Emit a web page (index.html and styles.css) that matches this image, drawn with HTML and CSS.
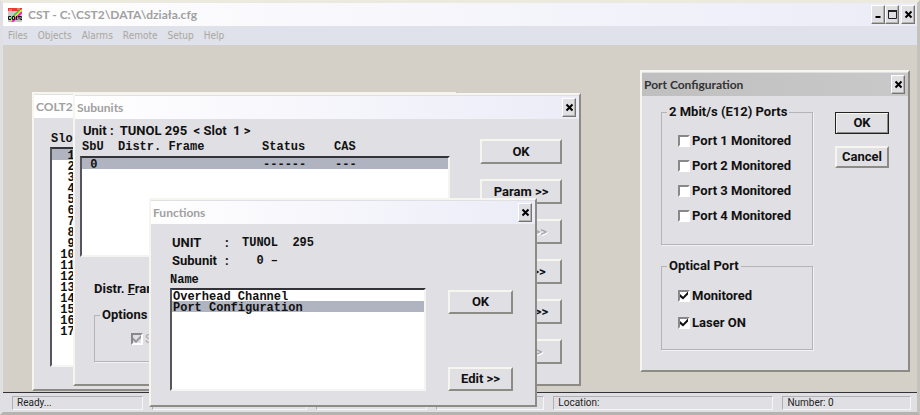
FILE: index.html
```html
<!DOCTYPE html>
<html lang="en">
<head>
<meta charset="utf-8">
<title>CST - C:\CST2\DATA\działa.cfg</title>
<link rel="stylesheet" href="styles.css">
</head>
<body>
<div class="app">
  <header class="titlebar">
    <svg class="logo" viewBox="0 0 14 14" aria-hidden="true">
      <rect width="14" height="14" fill="#c9c9c4"/>
      <rect width="14" height="3" fill="#e8392b"/>
      <path d="M1 2h3M9 1h3" stroke="#f8b0a0"/>
      <path d="M2 12L12 2" stroke="#30c040" stroke-width="2"/>
      <path d="M3 13L14 2" stroke="#f0f020" stroke-width="2"/>
      <path d="M4 14l10-10" stroke="#f020e0" stroke-width="2"/>
      <path d="M3 8.500H.5v3H3M4.500 8.500h2v3h-2zM8.500 8v3.500h1M10 8.500h2M11 8.500v3M12 8.500h1.500l-1 3h1.500" fill="none" stroke="#111"/>
    </svg>
    <h1>CST - C:\CST2\DATA\działa.cfg</h1>
    <div class="controls">
      <button class="sys" type="button" aria-label="Minimize"><svg viewBox="0 0 9 9"><path d="M1.500 7h5" stroke="#000" stroke-width="2"/></svg></button>
      <button class="sys" type="button" aria-label="Maximize"><svg viewBox="0 0 9 9"><path d="M.5 1v7.500h8V1" fill="none" stroke="#222"/><path d="M0 1h9" stroke="#222" stroke-width="2"/></svg></button>
      <button class="sys apart" type="button" aria-label="Close"><svg viewBox="0 0 9 9"><path d="M1.500 1.500l6 6M7.500 1.500l-6 6" stroke="#000" stroke-width="2"/></svg></button>
    </div>
  </header>
  <nav class="menu">
    <button type="button">Files</button>
    <button type="button">Objects</button>
    <button type="button">Alarms</button>
    <button type="button">Remote</button>
    <button type="button">Setup</button>
    <button type="button">Help</button>
  </nav>

  <main class="desktop">
    <section class="window colt">
      <div class="bar"><h2>COLT2</h2></div>
      <div class="body">
        <label class="mono" for="slots">Slot</label>
        <select class="list mono" id="slots" size="17">
          <option selected>&nbsp;&nbsp;1</option><option>&nbsp;&nbsp;2</option><option>&nbsp;&nbsp;3</option><option>&nbsp;&nbsp;4</option><option>&nbsp;&nbsp;5</option><option>&nbsp;&nbsp;6</option><option>&nbsp;&nbsp;7</option><option>&nbsp;&nbsp;8</option><option>&nbsp;&nbsp;9</option><option>&nbsp;10</option><option>&nbsp;11</option><option>&nbsp;12</option><option>&nbsp;13</option><option>&nbsp;14</option><option>&nbsp;15</option><option>&nbsp;16</option><option>&nbsp;17</option>
        </select>
      </div>
    </section>

    <section class="window subunits">
      <div class="bar"><h2>Subunits</h2><button class="sys" type="button" aria-label="Close"><svg viewBox="0 0 9 9"><path d="M1.500 1.500l6 6M7.500 1.500l-6 6" stroke="#000" stroke-width="2"/></svg></button></div>
      <div class="body">
        <div class="content">
          <p class="unit">Unit :&nbsp; TUNOL 295 &nbsp;&lt; Slot &nbsp;1 &gt;</p>
          <label class="mono columns" for="units">SbU  Distr. Frame        Status    CAS</label>
          <select class="list mono" id="units" size="9">
            <option selected>&nbsp;0&nbsp;&nbsp;&nbsp;&nbsp;&nbsp;&nbsp;&nbsp;&nbsp;&nbsp;&nbsp;&nbsp;&nbsp;&nbsp;&nbsp;&nbsp;&nbsp;&nbsp;&nbsp;&nbsp;&nbsp;&nbsp;&nbsp;&nbsp;------&nbsp;&nbsp;&nbsp;&nbsp;---</option>
          </select>
          <p class="frame">Distr. <u>F</u>rame</p>
          <fieldset class="options">
            <legend>Options</legend>
            <label class="check"><input type="checkbox" checked disabled>Status</label>
          </fieldset>
        </div>
        <div class="actions">
          <button class="push" type="button">OK</button>
          <button class="push" type="button">Param &gt;&gt;</button>
          <button class="push" type="button" disabled>Alarm &gt;&gt;</button>
          <button class="push" type="button">Funct &gt;&gt;</button>
          <button class="push" type="button">Status &gt;&gt;</button>
          <button class="push" type="button" disabled>Test &gt;&gt;</button>
        </div>
      </div>
    </section>

    <section class="window functions">
      <div class="bar"><h2>Functions</h2><button class="sys" type="button" aria-label="Close"><svg viewBox="0 0 9 9"><path d="M1.500 1.500l6 6M7.500 1.500l-6 6" stroke="#000" stroke-width="2"/></svg></button></div>
      <div class="body">
        <div class="content">
          <dl>
            <dt>UNIT</dt><dd>:</dd><dd class="mono">TUNOL  295</dd>
            <dt>Subunit</dt><dd>:</dd><dd class="mono">  0 –</dd>
          </dl>
          <label class="mono" for="names">Name</label>
          <select class="list mono" id="names" size="9">
            <option>Overhead Channel</option>
            <option selected>Port Configuration</option>
          </select>
        </div>
        <div class="actions">
          <button class="push" type="button">OK</button>
          <button class="push" type="button">Edit &gt;&gt;</button>
        </div>
      </div>
    </section>

    <section class="window ports active">
      <div class="bar"><h2>Port Configuration</h2><button class="sys" type="button" aria-label="Close"><svg viewBox="0 0 9 9"><path d="M1.500 1.500l6 6M7.500 1.500l-6 6" stroke="#000" stroke-width="2"/></svg></button></div>
      <div class="body">
        <div class="content">
          <fieldset>
            <legend>2 Mbit/s (E12) Ports</legend>
            <label class="check"><input type="checkbox">Port 1 Monitored</label>
            <label class="check"><input type="checkbox">Port 2 Monitored</label>
            <label class="check"><input type="checkbox">Port 3 Monitored</label>
            <label class="check"><input type="checkbox">Port 4 Monitored</label>
          </fieldset>
          <fieldset class="optical">
            <legend>Optical Port</legend>
            <label class="check"><input type="checkbox" checked>Monitored</label>
            <label class="check"><input type="checkbox" checked>Laser ON</label>
          </fieldset>
        </div>
        <div class="actions">
          <button class="push default" type="button">OK</button>
          <button class="push" type="button">Cancel</button>
        </div>
      </div>
    </section>
  </main>

  <footer class="status">
    <span>Ready...</span><span></span><span></span><span></span><span>Location:</span><span>Number: 0</span>
  </footer>
</div>
</body>
</html>
```
FILE: styles.css
```css
:root {
  --face: #e0dfe4;
  --light: #f6f5ee;
  --shade: #8c8b86;
  --select: #b0b3c0;
}

* { box-sizing: border-box; }

body {
  margin: 0;
  background: #d4d0c8;
  font: bold 13px/16px Roboto, "Liberation Sans", sans-serif;
  color: #111;
}

h1, h2, p, dl, dd { margin: 0; font-weight: inherit; }

button, input, select { margin: 0; font: inherit; color: inherit; }

.app {
  display: flex;
  flex-direction: column;
  height: 100vh;
  border: 3px solid var(--face);
  border-top-color: #ece9df;
  border-right-color: #c4c2bd;
  border-bottom-color: #b4b3ae;
  background: #d4d0c8;
}

.titlebar {
  display: flex;
  align-items: center;
  height: 23px;
  padding: 0 2px 0 5px;
  background: linear-gradient(90deg, #fff, #ececf8);
}

.logo { width: 14px; height: 14px; margin-right: 6px; }

.titlebar h1 {
  flex: 1;
  font: bold 12px/20px Lato, "Noto Sans", sans-serif;
  color: #a0a0a0;
}

.controls { display: flex; }

.sys {
  display: flex;
  align-items: center;
  justify-content: center;
  width: 14px;
  height: 19px;
  padding: 0;
  border: 1px solid;
  border-color: #fff #77756f #77756f #fff;
  background: var(--face);
  box-shadow: inset -1px -1px #b5b4b0;
}

.sys svg { flex: none; width: 9px; height: 9px; }

.apart { margin-left: 2px; }

.menu {
  display: flex;
  gap: 10px;
  height: 19px;
  padding: 0 5px;
  background: #dfe1eb;
}

.menu button {
  padding: 0;
  border: 0;
  background: none;
  font: 10px/18px "DejaVu Sans Condensed", sans-serif;
  color: #aaa79c;
}

.desktop { position: relative; z-index: 1; flex: 1; }

.window {
  position: absolute;
  display: flex;
  flex-direction: column;
  border: 2px solid;
  border-color: var(--light) var(--shade) var(--shade) var(--light);
  background: var(--face);
}

/* Offsets are measured from the desktop's corner. */
.colt { left: 29px; top: 47px; width: 425px; height: 299px; }
.subunits { left: 70px; top: 48px; width: 508px; height: 293px; }
.functions { left: 146px; top: 153px; width: 388px; height: 209px; }
.ports { left: 637px; top: 25px; width: 270px; height: 302px; }

.bar {
  display: flex;
  align-items: center;
  justify-content: space-between;
  height: 24px;
  padding: 0 3px 0 2px;
  border-top: 1px solid var(--face);
  background: linear-gradient(90deg, #fff, #ececf8);
}

.bar h2 {
  font: bold 12px/20px Lato, "Noto Sans", sans-serif;
  color: #a0a0a0;
}

.active .bar { background: linear-gradient(90deg, #bfbfbf, #c9c9c9); }
.active h2 { color: #333; }

.body { display: flex; flex: 1; min-height: 0; }

.content, .colt .body { display: flex; flex-direction: column; }

.mono {
  font: bold 12px/16px "Liberation Mono", monospace;
  white-space: pre;
}

.list {
  min-height: 0;
  padding: 0;
  overflow: hidden;
  border: 2px solid;
  border-color: #33333a #f4f4f2 #f4f4f2 #55555c;
  border-radius: 0;
  outline: 0;
  background: #fff;
}

.list option {
  display: block;
  height: 11px;
  min-height: 0;
  padding: 0 1px;
  font: bold 12px/11px "Liberation Mono", monospace;
}

.list option:checked {
  background: linear-gradient(var(--select), var(--select));
  color: #111;
}

.push {
  height: 25px;
  padding: 0;
  border: 2px solid;
  border-color: var(--light) var(--shade) var(--shade) var(--light);
  background: var(--face);
}

.push:disabled { color: #aaa9ad; text-shadow: 1px 1px #fff; }

.actions { display: flex; flex-direction: column; }

fieldset {
  min-width: 0;
  margin: 0;
  padding: 0 16px;
  border: 1px solid #b4b3b7;
  box-shadow: 1px 1px #f2f2f2;
}

legend { margin-left: -11px; padding: 0 2px; }

.check { display: flex; align-items: center; gap: 2px; height: 25px; }

.check input {
  appearance: none;
  width: 12px;
  height: 12px;
  border: 2px solid;
  border-color: #88878a #fff #fff #88878a;
  background: #fff;
}

.check input:checked { display: grid; }

.check input:checked::before {
  content: "";
  width: 8px;
  height: 8px;
  background: #111;
  clip-path: polygon(0 30%, 38% 65%, 100% 0, 100% 38%, 38% 100%, 0 68%);
}

.check input:disabled { background: var(--face); }
.check input:disabled::before { background: #999; }
.check:has(:disabled) { color: #aaa9ad; font-weight: normal; }

.colt .body { padding: 13px 14px 22px 16px; }
.colt label { padding-left: 1px; }
.colt .list { flex: 1; }

.subunits .body { justify-content: space-between; padding: 4px 17px 20px 5px; }
.subunits .content { width: 370px; }
.unit { padding-left: 3px; }
.columns { padding-left: 2px; }
.subunits .list { height: 101px; margin-top: 1px; }
.frame { padding: 24px 0 10px 14px; }
.options { height: 55px; margin: 0 14px; padding-left: 36px; }
.options legend { margin-left: -31px; }
.options .check { height: 32px; }
.subunits .actions { gap: 15px; width: 82px; padding-top: 16px; }

.functions .body { justify-content: space-between; padding: 11px 22px 14px 19px; }
.functions .content { width: 256px; }
.functions dl {
  display: grid;
  grid-template-columns: 53px 17px 1fr;
  row-gap: 2px;
  padding-left: 2px;
}
.functions .list { flex: 1; }
.functions label { margin-top: 3px; }
.functions .actions { justify-content: space-between; width: 65px; padding-top: 55px; }
.functions .push { height: 24px; }

.ports .body { justify-content: space-between; padding: 8px 19px 18px; }
.ports .content { width: 152px; }
.ports fieldset { height: 141px; }
.ports fieldset + fieldset { height: 92px; margin-top: 13px; }
.ports legend + .check { margin-top: 8px; }
.ports .optical .check { height: 27px; }
.ports .actions { gap: 12px; width: 54px; padding-top: 8px; }
.ports .push { height: 22px; }
.default { border-width: 1px; border-color: #222; box-shadow: inset 1px 1px var(--light), inset -1px -1px var(--shade); }

.status {
  display: grid;
  grid-template-columns: 130fr 155fr 110fr 108fr 219fr 128fr;
  gap: 9px;
  height: 20px;
  padding: 3px 6px 2px 9px;
  border-top: 1px solid #333;
  background: var(--face);
}

.status span {
  padding-left: 4px;
  border: 1px solid;
  border-color: #b0afb3 #f6f6f6 #f6f6f6 #b0afb3;
  font: 10px/12px Roboto, sans-serif;
  color: #222;
}
```
